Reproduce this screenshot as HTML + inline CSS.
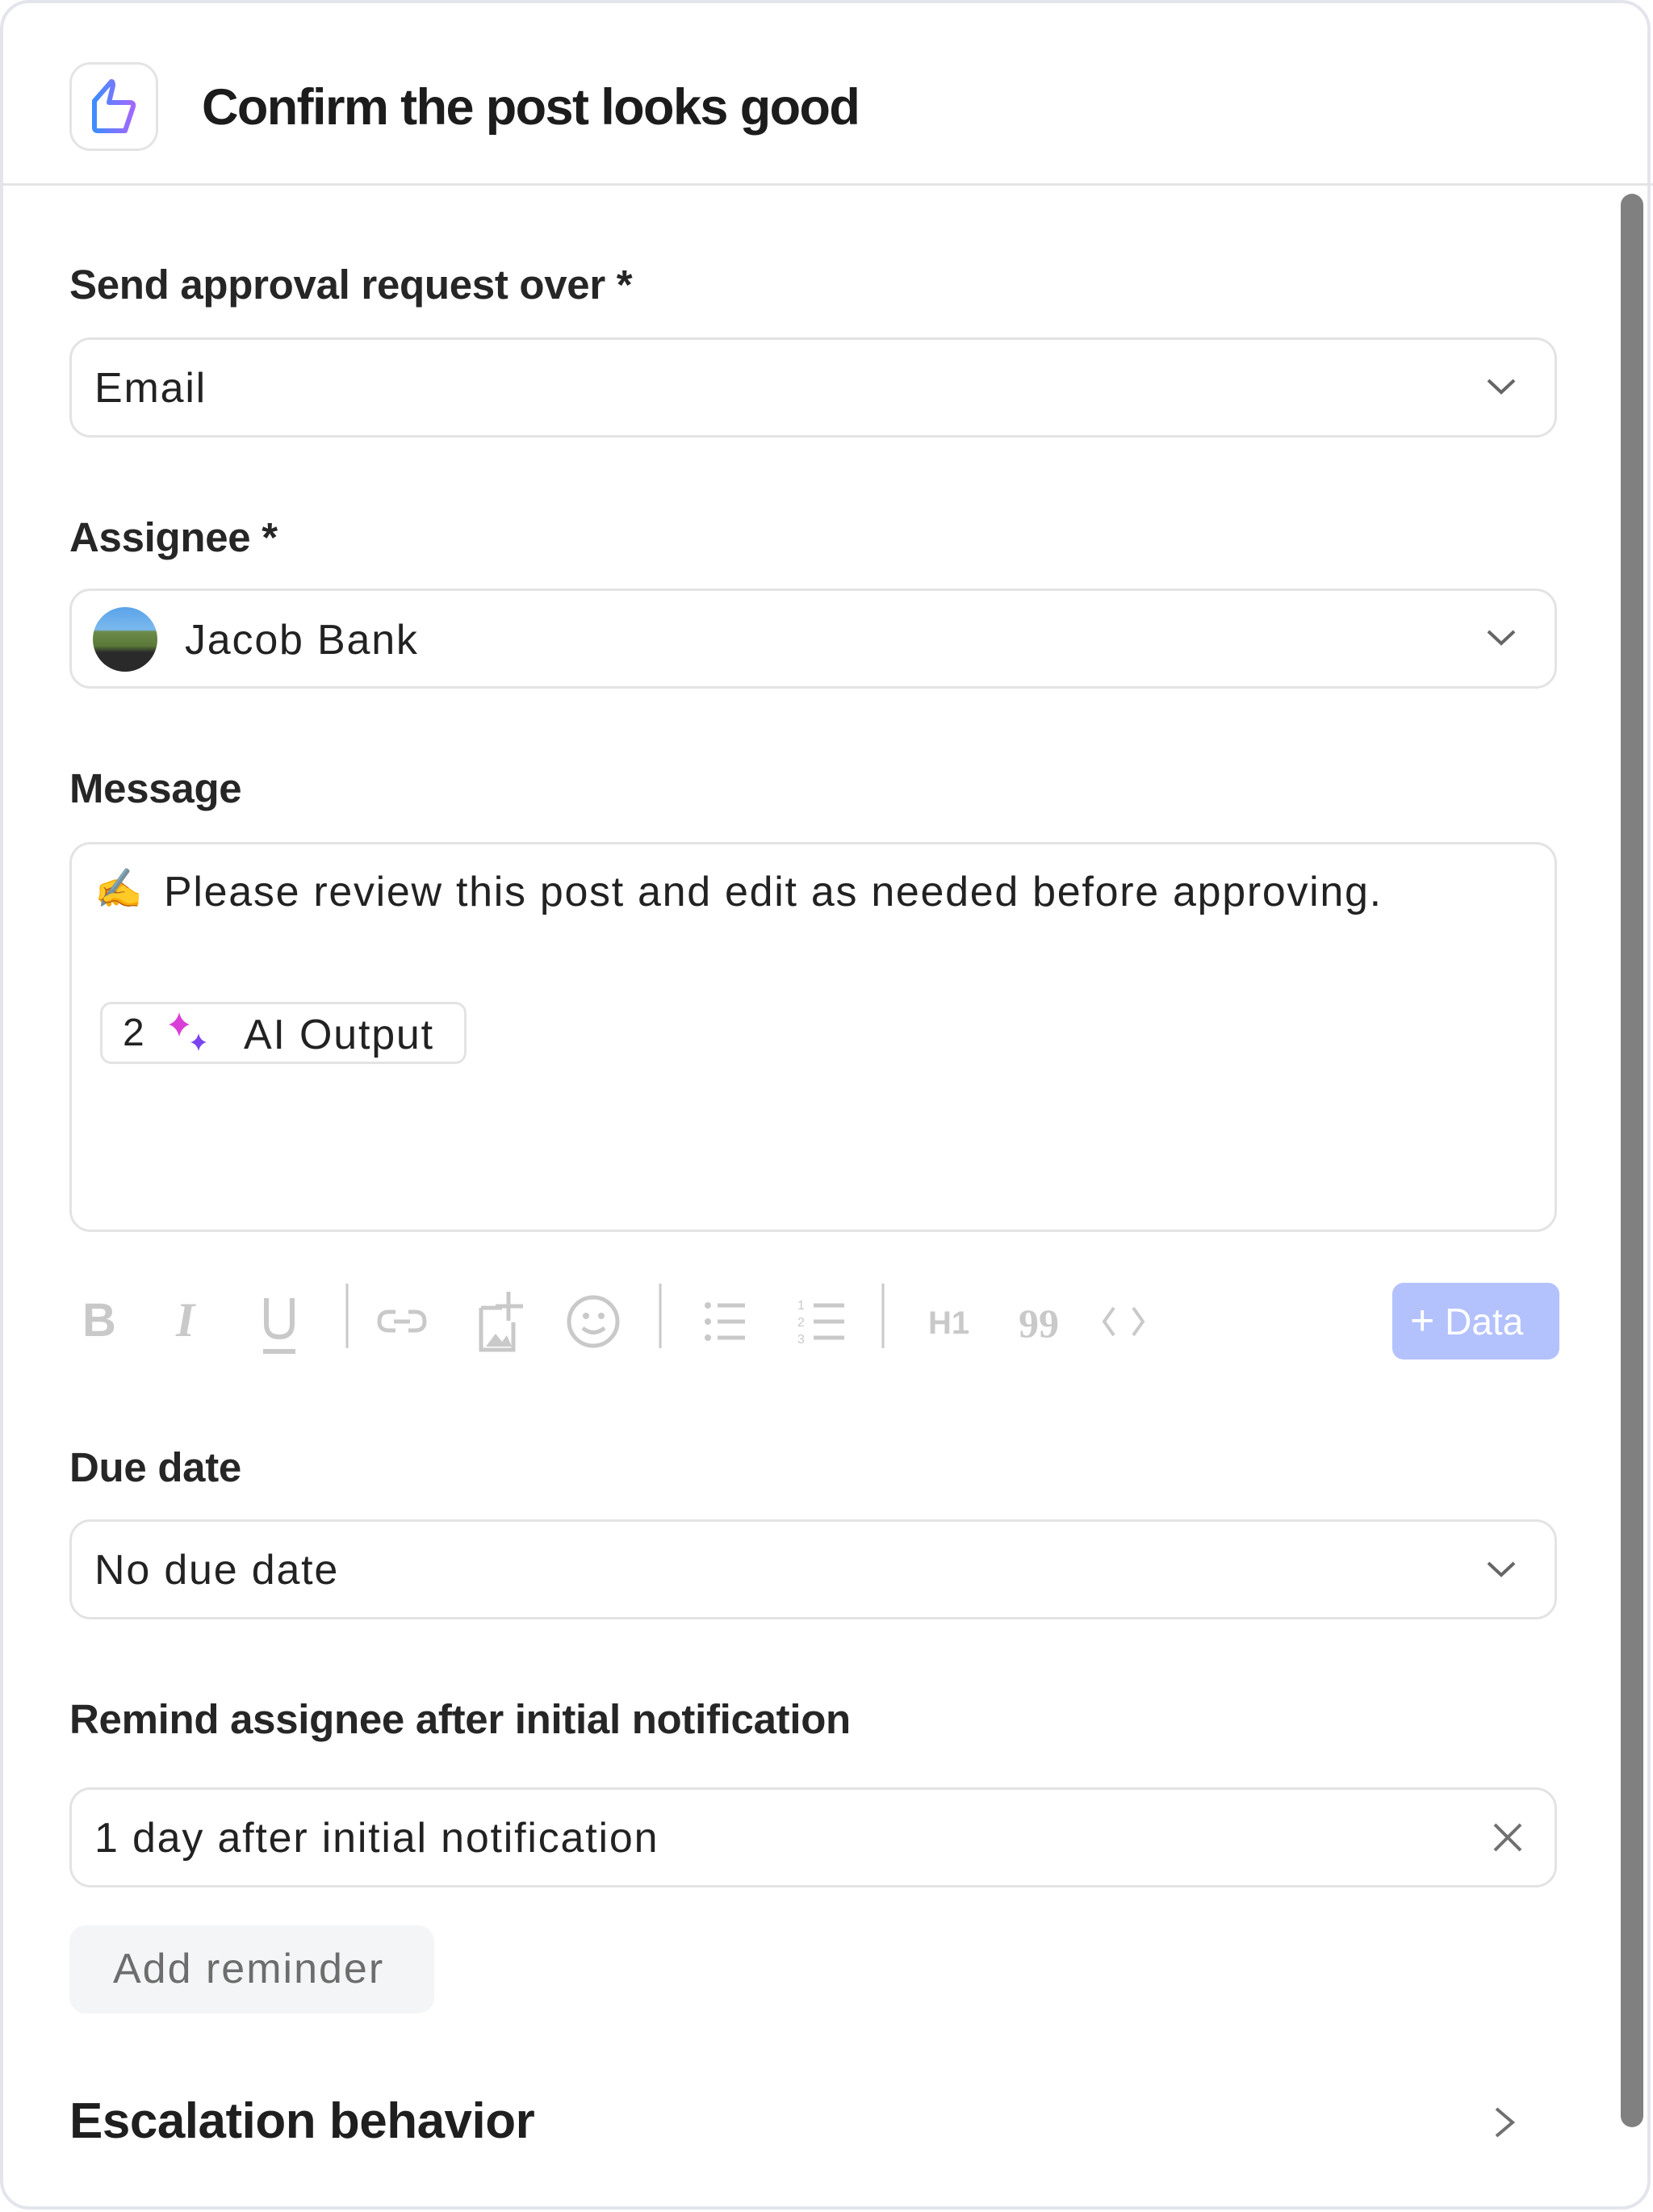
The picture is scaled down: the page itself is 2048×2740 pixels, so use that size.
<!DOCTYPE html>
<html><head><meta charset="utf-8"><style>
*{box-sizing:border-box;margin:0;padding:0}
body{width:2048px;height:2740px;background:#fff;font-family:"Liberation Sans",sans-serif;color:#222;position:relative;overflow:hidden}
.abs{position:absolute}
.card{left:0;top:0;width:2045px;height:2737px;border:4px solid #e4e5ec;border-radius:36px}
.lbl{position:absolute;left:86px;font-size:51px;font-weight:bold;color:#262626;line-height:1;white-space:nowrap;letter-spacing:-0.3px}
.box{position:absolute;left:86px;width:1843px;height:124px;border:3px solid #e3e3e3;border-radius:26px}
.val{position:absolute;font-size:52px;line-height:1;color:#222;white-space:nowrap;letter-spacing:1.8px}
</style></head><body>
<div class="abs card"></div>
<div class="abs" style="left:0;top:227px;width:2048px;height:3px;background:#e4e4e4"></div>
<div class="abs" style="left:86px;top:77px;width:110px;height:110px;border:3px solid #e4e4e4;border-radius:26px">
<svg width="104" height="104" viewBox="0 0 104 104" style="position:absolute;left:0;top:0">
<defs><linearGradient id="g" x1="0" x2="1" y1="0" y2="0"><stop offset="0" stop-color="#3f8cff"/><stop offset="1" stop-color="#a268ff"/></linearGradient></defs>
<path d="M49 21 L28 45 L28 78 Q28 82 32 82 L66 82 L76 52 Q77 47 72 47 L46 47 L51 26 Q51 21 49 21 Z" fill="none" stroke="url(#g)" stroke-width="6" stroke-linejoin="round"/>
</svg></div>
<div class="abs" style="left:250px;top:102px;font-size:63px;font-weight:bold;letter-spacing:-1.6px;line-height:1;color:#1c1c1c">Confirm the post looks good</div>

<div class="lbl" style="top:327px">Send approval request over *</div>
<div class="box" style="top:418px"></div>
<div class="val" style="left:117px;top:455px">Email</div>
<svg class="abs" style="left:1840px;top:466px" width="40" height="26" viewBox="0 0 40 26"><path d="M4 5 L20 20 L36 5" fill="none" stroke="#666" stroke-width="4"/></svg>

<div class="lbl" style="top:640px">Assignee *</div>
<div class="box" style="top:729px"></div>
<div class="abs" style="left:115px;top:752px;width:80px;height:80px;border-radius:50%;overflow:hidden;background:linear-gradient(#5aa3e8 0,#7ab9ee 35%,#6c8a4a 38%,#5b7a3a 60%,#2a2a2a 70%,#2a2a2a 100%)"></div>
<div class="val" style="left:229px;top:767px">Jacob Bank</div>
<svg class="abs" style="left:1840px;top:777px" width="40" height="26" viewBox="0 0 40 26"><path d="M4 5 L20 20 L36 5" fill="none" stroke="#666" stroke-width="4"/></svg>

<div class="lbl" style="top:951px">Message</div>
<div class="abs" style="left:86px;top:1043px;width:1843px;height:483px;border:3px solid #e3e3e3;border-radius:26px"></div>
<div class="val" style="left:117px;top:1078px;font-size:48px">✍</div>
<div class="val" style="left:203px;top:1079px;letter-spacing:1.7px">Please review this post and edit as needed before approving.</div>
<div class="abs" style="left:124px;top:1241px;width:454px;height:77px;border:3px solid #e3e3e3;border-radius:14px"></div>
<div class="val" style="left:152px;top:1256px;font-size:48px">2</div>
<svg class="abs" style="left:208px;top:1252px" width="56" height="56" viewBox="0 0 56 56"><path d="M14 2 Q17 14 27 17 Q17 20 14 32 Q11 20 1 17 Q11 14 14 2Z" fill="#d93fd6"/><path d="M38 28 Q40 37 48 39 Q40 41 38 50 Q36 41 28 39 Q36 37 38 28Z" fill="#7a44f0"/></svg>
<div class="val" style="left:302px;top:1256px">AI Output</div>

<svg class="abs" style="left:90px;top:1590px" width="1360" height="95" viewBox="0 0 1360 95" fill="none" stroke="#c9c9c9" stroke-width="6">
<text x="12" y="65" font-family="Liberation Sans" font-weight="bold" font-size="58" fill="#c9c9c9" stroke="none">B</text>
<text x="128" y="65" font-family="Liberation Serif" font-style="italic" font-weight="bold" font-size="60" fill="#c9c9c9" stroke="none">I</text>
<path d="M240 18 V50 Q240 66 256 66 Q272 66 272 50 V18 M236 84 H276"/>
<path d="M340 0 V80 M728 0 V80 M1004 0 V80" stroke-width="3"/>
<path d="M400 35 H392 Q380 35 380 47 Q380 58 392 58 H400 M416 35 H424 Q436 35 436 47 Q436 58 424 58 H416 M398 47 H418" stroke-width="5"/>
<path d="M506 30 V82 H546 V48 M506 30 H532 M540 10 V46 M524 28 H558" stroke-width="5"/>
<path d="M512 78 L524 62 L532 72 L538 64 L544 78Z" fill="#c9c9c9" stroke="none"/>
<circle cx="645" cy="47" r="30" stroke-width="5"/>
<circle cx="636" cy="40" r="4" fill="#c9c9c9" stroke="none"/><circle cx="655" cy="40" r="4" fill="#c9c9c9" stroke="none"/>
<path d="M632 55 Q645 66 659 55" stroke-width="5"/>
<circle cx="787" cy="27" r="4" fill="#c9c9c9" stroke="none"/><circle cx="787" cy="47" r="4" fill="#c9c9c9" stroke="none"/><circle cx="787" cy="67" r="4" fill="#c9c9c9" stroke="none"/>
<path d="M799 27 H833 M799 47 H833 M799 67 H833 M918 27 H956 M918 47 H956 M918 67 H956" stroke-width="5"/>
<text x="898" y="32" font-size="16" fill="#c9c9c9" stroke="none" font-family="Liberation Sans">1</text>
<text x="898" y="53" font-size="16" fill="#c9c9c9" stroke="none" font-family="Liberation Sans">2</text>
<text x="898" y="74" font-size="16" fill="#c9c9c9" stroke="none" font-family="Liberation Sans">3</text>
<text x="1060" y="62" font-size="40" font-weight="bold" fill="#c9c9c9" stroke="none" font-family="Liberation Sans">H1</text>
<text x="1172" y="66" font-size="50" font-weight="bold" fill="#c9c9c9" stroke="none" font-family="Liberation Serif">99</text>
<path d="M1290 30 L1278 47 L1290 64 M1314 30 L1326 47 L1314 64" stroke-width="4"/>
</svg>
<div class="abs" style="left:1725px;top:1589px;width:207px;height:95px;background:#b3c1fd;border-radius:14px;color:#fff;font-size:46px;line-height:95px;padding-left:22px;white-space:nowrap"><span style="font-size:52px">+</span> Data</div>

<div class="lbl" style="top:1792px">Due date</div>
<div class="box" style="top:1882px"></div>
<div class="val" style="left:117px;top:1919px">No due date</div>
<svg class="abs" style="left:1840px;top:1931px" width="40" height="26" viewBox="0 0 40 26"><path d="M4 5 L20 20 L36 5" fill="none" stroke="#666" stroke-width="4"/></svg>

<div class="lbl" style="top:2104px">Remind assignee after initial notification</div>
<div class="box" style="top:2214px"></div>
<div class="val" style="left:117px;top:2251px">1 day after initial notification</div>
<svg class="abs" style="left:1848px;top:2256px" width="40" height="40" viewBox="0 0 40 40"><path d="M4 4 L36 36 M36 4 L4 36" stroke="#707070" stroke-width="4"/></svg>

<div class="abs" style="left:86px;top:2385px;width:452px;height:109px;background:#f4f5f6;border-radius:20px;color:#6d6d6d;font-size:52px;line-height:109px;padding-left:54px;letter-spacing:2px">Add reminder</div>

<div class="abs" style="left:86px;top:2597px;font-size:62px;line-height:1;color:#1f1f1f;font-weight:bold;letter-spacing:-0.5px">Escalation behavior</div>
<svg class="abs" style="left:1850px;top:2608px" width="30" height="42" viewBox="0 0 30 42"><path d="M4 4 L24 21 L4 38" fill="none" stroke="#707070" stroke-width="4"/></svg>

<div class="abs" style="left:2008px;top:240px;width:28px;height:2395px;background:#808080;border-radius:14px"></div>
</body></html>
